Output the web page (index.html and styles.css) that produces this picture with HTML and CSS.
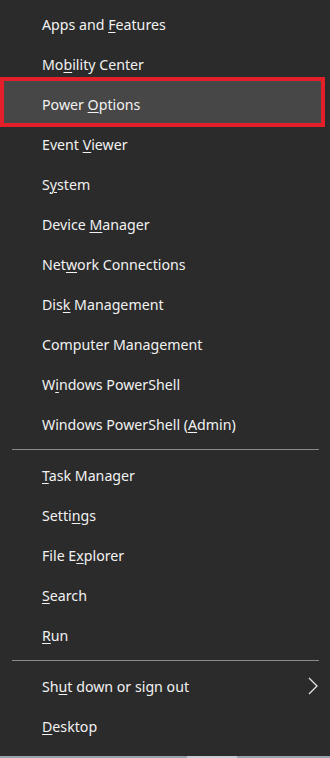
FILE: index.html
```html
<!DOCTYPE html>
<html>
<head>
<meta charset="utf-8">
<link rel="stylesheet" href="styles.css">
</head>
<body>
<div class="menu">
  <div class="item"><span>Apps and <u>F</u>eatures</span></div>
  <div class="item"><span>Mo<u>b</u>ility Center</span></div>
  <div class="item highlight"><span>Power <u>O</u>ptions</span></div>
  <div class="item"><span>Event <u>V</u>iewer</span></div>
  <div class="item"><span>S<u>y</u>stem</span></div>
  <div class="item"><span>Device <u>M</u>anager</span></div>
  <div class="item"><span>Net<u>w</u>ork Connections</span></div>
  <div class="item"><span>Dis<u>k</u> Management</span></div>
  <div class="item"><span>Computer Mana<u>g</u>ement</span></div>
  <div class="item"><span>W<u>i</u>ndows PowerShell</span></div>
  <div class="item"><span>Windows PowerShell (<u>A</u>dmin)</span></div>
  <div class="sep"></div>
  <div class="item"><span><u>T</u>ask Manager</span></div>
  <div class="item"><span>Setti<u>n</u>gs</span></div>
  <div class="item"><span>File E<u>x</u>plorer</span></div>
  <div class="item"><span><u>S</u>earch</span></div>
  <div class="item"><span><u>R</u>un</span></div>
  <div class="sep"></div>
  <div class="item submenu"><span>Sh<u>u</u>t down or sign out</span>
    <svg class="chev" width="12" height="18" viewBox="0 0 12 18"><path d="M2 1 L10 9 L2 17" fill="none" stroke="#e6e6e6" stroke-width="1.3"/></svg>
  </div>
  <div class="item"><span><u>D</u>esktop</span></div>
</div>
<div class="taskbar"><div class="tb-seg"></div></div>
</body>
</html>
```

FILE: styles.css
```css
html, body {
  margin: 0;
  padding: 0;
  background: #2b2b2b;
  width: 330px;
  height: 758px;
  overflow: hidden;
}
body {
  font-family: "Noto Sans", "Open Sans", sans-serif;
  font-size: 14.2px;
  color: #f2f2f2;
  display: flex;
  flex-direction: column;
}
.menu {
  padding-top: 4px;
  flex: 1;
}
.item {
  height: 40px;
  display: flex;
  align-items: center;
  padding-left: 42px;
  box-sizing: border-box;
  white-space: nowrap;
}
.item u {
  text-decoration-thickness: 1px;
  text-underline-offset: 2px;
}
.highlight {
  height: 50px;
  margin: -7px 5px -3px 0;
  border: 4px solid #e3202a;
  background: #474747;
  padding-left: 38px;
  padding-top: 4px;
}
.sep {
  height: 1px;
  background: #8a8a8a;
  margin: 5px 11px 5px 12px;
}
.submenu {
  position: relative;
}
.chev {
  position: absolute;
  left: 307px;
  top: 11px;
}
.taskbar {
  height: 2px;
  background: #9aa3ab;
  position: relative;
}
.tb-seg {
  position: absolute;
  left: 187px;
  width: 50px;
  top: 0;
  height: 2px;
  background: #c6ccd2;
}
```
